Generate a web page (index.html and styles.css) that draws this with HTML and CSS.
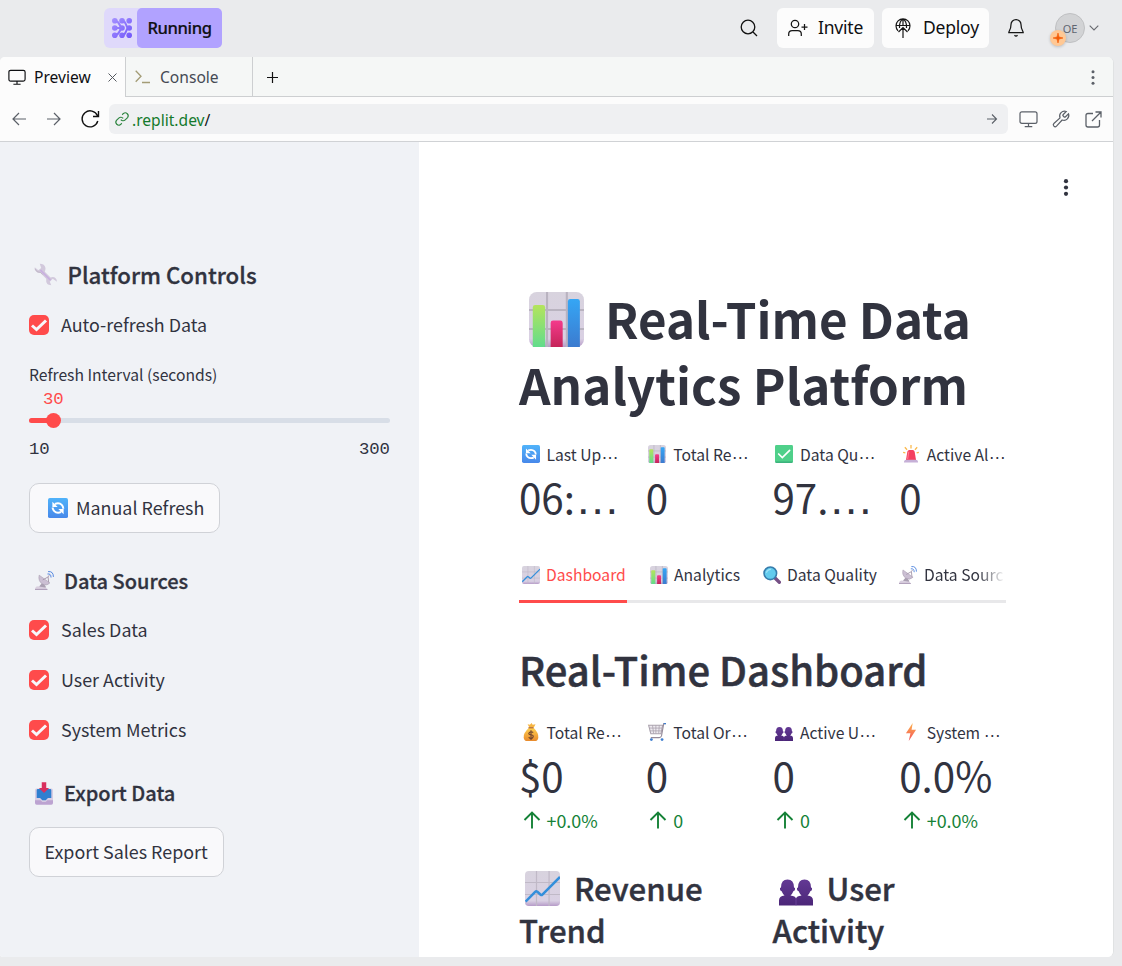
FILE: index.html
```html
<!DOCTYPE html>
<html lang="en">
<head>
<meta charset="utf-8">
<title>Real-Time Data Analytics Platform</title>
<link rel="stylesheet" href="styles.css">
</head>
<body>
<svg class="defs" aria-hidden="true">
  <defs>
    <linearGradient id="gGreen" x2="0" y2="1"><stop stop-color="#b4e45c"/><stop offset="1" stop-color="#62dc8c"/></linearGradient>
    <linearGradient id="gPink" x2="0" y2="1"><stop stop-color="#f43b8c"/><stop offset="1" stop-color="#c52459"/></linearGradient>
    <linearGradient id="gBlue" x2="0" y2="1"><stop stop-color="#35a6f5"/><stop offset="1" stop-color="#3c7bcf"/></linearGradient>
    <linearGradient id="gSky" x2="0" y2="1"><stop stop-color="#50b3fa"/><stop offset="1" stop-color="#4788ea"/></linearGradient>
    <linearGradient id="gPaper" x2="0" y2="1"><stop stop-color="#d8d3de"/><stop offset=".85" stop-color="#d9d0e3"/><stop offset="1" stop-color="#b69bc8"/></linearGradient>
    <linearGradient id="gPurple" x2="0" y2="1"><stop stop-color="#633994"/><stop offset="1" stop-color="#4b2678"/></linearGradient>
    <linearGradient id="gBolt" x2="0" y2="1"><stop stop-color="#fcb34b"/><stop offset="1" stop-color="#f4515c"/></linearGradient>
    <linearGradient id="gGold" x2="0" y2="1"><stop stop-color="#ffcf4f"/><stop offset="1" stop-color="#e88a2c"/></linearGradient>
    <linearGradient id="gLogo" gradientUnits="userSpaceOnUse" x1="0" y1="0" x2="20" y2="20"><stop stop-color="#a592ff"/><stop offset="1" stop-color="#7257fa"/></linearGradient>
  </defs>
  <symbol id="bars" viewBox="0 0 32 32">
    <rect width="32" height="32" rx="4.5" fill="url(#gPaper)"/>
    <path d="M10.5 0v32M22 0v32M0 10.5h32M0 21.5h32" stroke="#b9b3c0" stroke-width="1.2"/>
    <path d="M2.2 32V9q0-1.4 1.4-1.4H8q1.400 0 1.400 1.400v23z" fill="url(#gGreen)"/>
    <path d="M12.600 32V18q0-1.400 1.400-1.400h4.200q1.400 0 1.400 1.400v14z" fill="url(#gPink)"/>
    <path d="M22.600 32V5.500q0-1.400 1.400-1.400h4.200q1.400 0 1.400 1.400V32z" fill="url(#gBlue)"/>
  </symbol>
  <symbol id="trend" viewBox="0 0 32 32">
    <rect width="32" height="32" rx="3.5" fill="url(#gPaper)"/>
    <path d="M10.5 0v32M22 0v32M0 10.5h32M0 21.5h32" stroke="#c0b9c7" stroke-width="1.1"/>
    <path d="M.5 28l8.800-9q1-1 2 0l3 2.700q.8.600 1.600-.2L32 5.500" fill="none" stroke="#348fdb" stroke-width="2.300"/>
  </symbol>
  <symbol id="sync" viewBox="0 0 32 32">
    <rect width="32" height="32" rx="3" fill="url(#gSky)"/>
    <path d="M11 9.500q7-2.500 11 1.500 2.500 2.500 2.500 6M21 22.500q-7 2.500-11-1.500-2.500-2.500-2.500-6" fill="none" stroke="#fff" stroke-width="3.200"/>
    <path d="M7 6v8.500h8.500zM25 26v-8.500h-8.500z" fill="#fff"/>
  </symbol>
  <symbol id="done" viewBox="0 0 32 32">
    <rect width="32" height="32" rx="2.500" fill="#4fd08a"/><path d="M1 30.500h30" stroke="#36a778" stroke-width="2"/>
    <path d="M6.500 16l6.500 6.500L26 9.500" fill="none" stroke="#fff" stroke-width="3" stroke-linecap="round"/>
  </symbol>
  <symbol id="siren" viewBox="0 0 32 32">
    <path d="M5 4l4 4.500M16 0v6M27 4l-4 4.500M2 13l4 1M30 13l-4 1" stroke="#fbb94c" stroke-width="2.300"/>
    <path d="M7 27l2.500-15q.5-3 3.500-3h6q3 0 3.500 3L25 27z" fill="#f43f5e"/><path d="M12 12l-2 13" stroke="#ff7890" stroke-width="2"/>
    <path d="M3.500 31q0-5 4-5h17q4 0 4 5z" fill="#c6b0d7"/>
  </symbol>
  <symbol id="lens" viewBox="0 0 32 32">
    <path d="M20 20l9 9" stroke="#765085" stroke-width="6" stroke-linecap="round"/>
    <circle cx="13" cy="13" r="11.200" fill="#62cbed" stroke="#367cac" stroke-width="2.800"/>
    <path d="M6 12q2-6 8-6" stroke="#a1e3f8" stroke-width="2" fill="none"/>
  </symbol>
  <symbol id="dish" viewBox="0 0 32 32">
    <path d="M8 25l5-6 5 7v3H6z" fill="#aaa0b2"/>
    <path d="M7 7q-2 10 5 14.500t13-1.500z" fill="#cbbfd3" stroke="#a79bae" stroke-width="1"/>
    <path d="M13 15l9-5 1 9M22 10l2-3" stroke="#a698ac" stroke-width="1.600" fill="none"/>
    <path d="M0 30q1-5 7-4l12 2 2 4H0z" fill="#d9cfdf"/><path d="M0 31h21" stroke="#aa9ab5" stroke-width="1.600"/>
    <path d="M21 5q6-1 6 6M22 1q9-1 9 9" fill="none" stroke="#4c82de" stroke-width="1.600"/>
  </symbol>
  <symbol id="wrench" viewBox="0 0 32 32">
    <path d="M1 6l5 4 4-3-2-6q7 0 8 6 0 3-1 5l8 8q8-2 9 6l-6-4-4 4 2 5q-8 0-7-9L9 14Q1 14 1 6z" fill="#d2c9dc"/>
    <path d="M9 10l14 14" stroke="#c8afe0" stroke-width="2.300"/><path d="M1 8q3 6 8 5l3 3" fill="none" stroke="#b7aebc"/>
  </symbol>
  <symbol id="inbox" viewBox="0 0 32 40">
    <rect y="11" width="32" height="25" rx="3" fill="#d7cce2"/><path d="M3 14q0-2 2-2h22q2 0 2 2v14h-6l-4 4h-6l-4-4H3z" fill="#2f7fd0"/>
    <path d="M0 32h10l3 3h6l3-3h10v5q0 3-3 3H3q-3 0-3-3z" fill="#bca3d1"/><path d="M12 0h8v10h5l-9 9-9-9h5z" fill="#d92f5e"/>
  </symbol>
  <symbol id="money" viewBox="0 0 32 32">
    <path d="M10 2l4 1 3-3 2 3 5-1-3 6h-8z" fill="#f6b542"/><path d="M12 9h9q9 9 8 17-1 6-6 6H9q-5 0-6-6-1-8 9-17z" fill="url(#gGold)"/>
    <path d="M11.500 8.500h9" stroke="#a95b2c" stroke-width="2"/><path d="M20 17q-4-3-7 0t3 4 3 5-7-1M16 13v17" fill="none" stroke="#70442e" stroke-width="2"/>
  </symbol>
  <symbol id="cart" viewBox="0 0 32 32">
    <path d="M1 4h25l-3 15H5z" fill="#eeeaf0" stroke="#aaa2ad" stroke-width="1.800"/>
    <path d="M8 4l2 15M14 4v15M20 4l-1 15M2 9h23M3 14h21" stroke="#aaa2ad" stroke-width="1.400"/>
    <path d="M32 1h-4l-4 22q-1 3-4 3H5" fill="none" stroke="#958b9a" stroke-width="2"/>
    <path d="M28 1h4" stroke="#3f7fd0" stroke-width="2.200"/><circle cx="6" cy="29.500" r="2.500" fill="#3f7fd0"/><circle cx="25" cy="29.500" r="2.500" fill="#3f7fd0"/>
  </symbol>
  <symbol id="people" viewBox="0 0 34 26">
    <path d="M2 8q0-8 6.500-8T15 8q1.500 0 1 2-.5 1.500-1.500 1.500Q13 15 11.500 16q5 .500 5.500 3 .500-2.500 5.500-3-1.500-1-3-4.500-1 0-1.500-1.500-.5-2 1-2 0-8 6.500-8T32 8q1.500 0 1 2-.5 1.500-1.500 1.500Q30 15 28.500 16q5.500.500 5.500 5v5H0v-5q0-4.500 5.500-5Q4 15 2.500 11.500q-1 0-1.500-1.500-.5-2 1-2z" fill="url(#gPurple)"/>
    <path d="M17 19v7" stroke="#744aa4" stroke-width=".7"/>
  </symbol>
  <symbol id="bolt" viewBox="0 0 32 32"><path d="M19 0L7 18h8l-3 14L25 12h-8z" fill="url(#gBolt)"/></symbol>
  <symbol id="up" viewBox="0 0 18 18"><path d="M9 17.500V2M1.500 9L9 1.500 16.500 9" fill="none" stroke="currentColor" stroke-width="1.900"/></symbol>
  <symbol id="monitor" viewBox="0 0 20 18"><path d="M3 1h14q2 0 2 2v8q0 2-2 2H3q-2 0-2-2V3q0-2 2-2zM10 13v3.500M6 16.500h8" fill="none" stroke="currentColor" stroke-width="1.300"/></symbol>
  <symbol id="left" viewBox="0 0 14 14"><path d="M14 7H1M7 1L1 7l6 6" fill="none" stroke="currentColor" stroke-width="1.200"/></symbol>
  <symbol id="right" viewBox="0 0 14 14"><path d="M0 7h13M7 1l6 6-6 6" fill="none" stroke="currentColor" stroke-width="1.200"/></symbol>
</svg>

<header class="topbar">
  <div class="run">
    <span class="run-logo"><svg width="20" height="20" viewBox="0 0 20 20" fill="url(#gLogo)"><path d="M3 3q3 0 4.500 3.500T11 10q-2 0-3.500 3.500T3 17M10 3q3 0 4 3.500t3 3.500q-2 0-3 3.500T10 17M3 10h7" stroke="url(#gLogo)" stroke-width="2" fill="none"/><circle cx="2.800" cy="2.800" r="2.800"/><circle cx="10" cy="2.800" r="2.800"/><circle cx="17.200" cy="2.800" r="2.800"/><circle cx="2.800" cy="10" r="2.800"/><circle cx="10" cy="10" r="2.800"/><circle cx="17.200" cy="10" r="2.800"/><circle cx="2.800" cy="17.200" r="2.800"/><circle cx="10" cy="17.200" r="2.800"/><circle cx="17.200" cy="17.200" r="2.800"/></svg></span>
    <span class="run-label">Running</span>
  </div>
  <div class="top-actions">
    <svg class="search" width="18" height="18" viewBox="0 0 18 18"><path d="M13 13l4 4" stroke="#111" stroke-width="1.300"/><circle cx="8" cy="8" r="6.800" fill="none" stroke="#111" stroke-width="1.300"/></svg>
    <button class="top-btn invite"><svg width="20" height="18" viewBox="0 0 20 18" fill="none" stroke="#161616" stroke-width="1.250"><circle cx="7" cy="5" r="3.700"/><path d="M.7 17v-2q0-3.500 3.500-3.500h5.600q3.500 0 3.500 3.500v2M16.500 5v6M13.500 8h6"/></svg><span>Invite</span></button>
    <button class="top-btn deploy"><svg width="16" height="20" viewBox="0 0 16 20" fill="none" stroke="#161616" stroke-width="1.200"><path d="M3 12.800A7 7 0 1 1 13 12.800M1 7.500h14M4.500 10Q4 3.500 8 .7q4 2.800 3.500 9.300M8 .7V8M8 20V10M3.500 14L8 9.500l4.500 4.500"/></svg><span>Deploy</span></button>
    <svg class="bell" width="16" height="18" viewBox="0 0 16 18" fill="none" stroke="#161616" stroke-width="1.250"><path d="M3 5.500a5 5 0 0 1 10 0c0 5 2.200 6.500 2.200 8H.8C.8 12 3 10.500 3 5.500zM6.500 16q1.500 2 3 0"/></svg>
    <div class="avatar"><span>OE</span><i class="spark"><svg width="10" height="10" viewBox="0 0 10 10"><path d="M5 0l1 4 4 1-4 1-1 4-1-4-4-1 4-1z" fill="#f45b05" stroke="#f45b05" stroke-width=".6"/></svg></i></div>
    <svg class="caret" width="10" height="6" viewBox="0 0 10 6"><path d="M.7.700L5 5l4.300-4.300" fill="none" stroke="#686a70" stroke-width="1.100"/></svg>
  </div>
</header>

<div class="pane">
  <nav class="tabs">
    <div class="tab tab-on"><svg width="18" height="17"><use href="#monitor"/></svg><span>Preview</span><svg class="close" width="9" height="9" viewBox="0 0 9 9"><path d="M.5.500l8 8M8.500.500l-8 8" stroke="#555960" stroke-width="1"/></svg></div>
    <div class="tab tab-off"><svg width="15" height="14" viewBox="0 0 15 14"><path d="M.7.700L6 6.200.7 11.700M7 12.500h8" fill="none" stroke="#a39c76" stroke-width="1.300"/></svg><span>Console</span></div>
    <svg class="plus" width="11" height="11" viewBox="0 0 11 11"><path d="M5.500 0v11M0 5.500h11" stroke="#111" stroke-width="1.200"/></svg>
    <svg class="dots" width="4" height="15" viewBox="0 0 4 15" fill="#5b6068"><circle cx="2" cy="1.700" r="1.500"/><circle cx="2" cy="7.500" r="1.500"/><circle cx="2" cy="13.300" r="1.500"/></svg>
  </nav>
  <div class="toolbar">
    <svg class="nav-ic" width="14" height="14"><use href="#left"/></svg>
    <svg class="nav-ic" width="14" height="14"><use href="#right"/></svg>
    <svg class="reload" width="19" height="18" viewBox="0 0 19 18"><path d="M16.800 11A8 8 0 1 1 16.500 5.800M17.500 1v5.500H12" fill="none" stroke="#111" stroke-width="1.400"/></svg>
    <div class="url">
      <svg width="14" height="14" viewBox="0 0 24 24" fill="none" stroke="#2e8540" stroke-width="2"><path d="M10 13a5 5 0 0 0 7.500.5l4-4a5 5 0 0 0-7-7l-2.200 2.200M14 11a5 5 0 0 0-7.500-.5l-4 4a5 5 0 0 0 7 7l2.200-2.200"/></svg>
      <span class="host">.replit.dev<b>/</b></span>
      <svg class="go" width="10" height="10" viewBox="0 0 10 10"><path d="M0 5h9.500M5 .5L9.500 5 5 9.500" fill="none" stroke="#5b6068" stroke-width="1.100"/></svg>
    </div>
    <svg class="t1" width="19" height="17"><use href="#monitor"/></svg>
    <svg class="t2" width="18" height="18" viewBox="0 0 24 24" fill="none" stroke="#5b6068" stroke-width="1.600"><path d="M14.700 6.300a1 1 0 0 0 0 1.400l1.600 1.600a1 1 0 0 0 1.400 0l4.300-4.300a6.500 6.500 0 0 1-8.500 8.300L6 21.500a2.300 2.300 0 0 1-3.500-3.500l8.200-7.500A6.500 6.500 0 0 1 19 2z"/></svg>
    <svg class="t3" width="17" height="17" viewBox="0 0 17 17" fill="none" stroke="#5b6068" stroke-width="1.300"><path d="M8 2.500H3q-2 0-2 2V14q0 2 2 2h9.500q2 0 2-2V9M10.500 1H16v5.500M16 1L7 10"/></svg>
  </div>

  <div class="app">
    <aside class="sidebar">
      <h2 class="side-title"><svg width="23" height="23"><use href="#wrench"/></svg><span>Platform Controls</span></h2>
      <label class="check"><i><svg width="16" height="13" viewBox="0 0 16 13"><path d="M1 6.500l4.500 4L15 1.500" fill="none" stroke="#f7f8fb" stroke-width="3"/></svg></i><span>Auto-refresh Data</span></label>
      <div class="slider-label">Refresh Interval (seconds)</div>
      <div class="slider-value">30</div>
      <div class="track"><div class="fill"></div><div class="thumb"></div></div>
      <div class="range"><span>10</span><span>300</span></div>
      <button class="btn manual"><svg width="20" height="20"><use href="#sync"/></svg><span>Manual Refresh</span></button>
      <h3 class="side-sub sub1"><svg width="19" height="23"><use href="#dish"/></svg><span>Data Sources</span></h3>
      <label class="check"><i><svg width="16" height="13" viewBox="0 0 16 13"><path d="M1 6.500l4.500 4L15 1.500" fill="none" stroke="#f7f8fb" stroke-width="3"/></svg></i><span>Sales Data</span></label>
      <label class="check"><i><svg width="16" height="13" viewBox="0 0 16 13"><path d="M1 6.500l4.500 4L15 1.500" fill="none" stroke="#f7f8fb" stroke-width="3"/></svg></i><span>User Activity</span></label>
      <label class="check"><i><svg width="16" height="13" viewBox="0 0 16 13"><path d="M1 6.500l4.500 4L15 1.500" fill="none" stroke="#f7f8fb" stroke-width="3"/></svg></i><span>System Metrics</span></label>
      <h3 class="side-sub sub2"><svg width="18" height="23"><use href="#inbox"/></svg><span>Export Data</span></h3>
      <button class="btn export"><span>Export Sales Report</span></button>
    </aside>

    <main class="main">
      <div class="menu"><svg width="6" height="17" viewBox="0 0 6 17" fill="#31333f"><circle cx="3" cy="2.200" r="2.100"/><circle cx="3" cy="8.500" r="2.100"/><circle cx="3" cy="14.800" r="2.100"/></svg></div>
      <h1 class="title"><svg width="55" height="55"><use href="#bars"/></svg>Real-Time Data<br><span>Analytics Platform</span></h1>
      <section class="metrics">
        <div><p class="m-label"><svg width="18" height="18"><use href="#sync"/></svg>Last Up<em>…</em></p><p class="m-value">06:<em>…</em></p></div>
        <div><p class="m-label"><svg width="18" height="18"><use href="#bars"/></svg>Total Re<em>…</em></p><p class="m-value">0</p></div>
        <div><p class="m-label"><svg width="18" height="18"><use href="#done"/></svg>Data Qu<em>…</em></p><p class="m-value">97.<em>…</em></p></div>
        <div><p class="m-label"><svg width="18" height="18"><use href="#siren"/></svg>Active Al<em>…</em></p><p class="m-value">0</p></div>
      </section>
      <div class="app-tabs">
        <span class="on"><svg width="18" height="18"><use href="#trend"/></svg>Dashboard</span>
        <span><svg width="18" height="18"><use href="#bars"/></svg>Analytics</span>
        <span><svg width="18" height="18"><use href="#lens"/></svg>Data Quality</span>
        <span><svg width="18" height="18"><use href="#dish"/></svg>Data Sourc</span>
      </div>
      <h2 class="section-title">Real-Time Dashboard</h2>
      <section class="metrics">
        <div><p class="m-label"><svg width="18" height="18"><use href="#money"/></svg>Total Re<em>…</em></p><p class="m-value">$0</p><p class="delta"><svg width="18" height="18"><use href="#up"/></svg>+0.0%</p></div>
        <div><p class="m-label"><svg width="18" height="18"><use href="#cart"/></svg>Total Or<em>…</em></p><p class="m-value">0</p><p class="delta"><svg width="18" height="18"><use href="#up"/></svg>0</p></div>
        <div><p class="m-label"><svg class="low" width="18" height="14"><use href="#people"/></svg>Active U<em>…</em></p><p class="m-value">0</p><p class="delta"><svg width="18" height="18"><use href="#up"/></svg>0</p></div>
        <div><p class="m-label"><svg width="18" height="18"><use href="#bolt"/></svg>System <em>…</em></p><p class="m-value">0.0%</p><p class="delta"><svg width="18" height="18"><use href="#up"/></svg>+0.0%</p></div>
      </section>
      <section class="charts">
        <h3><svg width="35" height="35"><use href="#trend"/></svg>Revenue<br>Trend</h3>
        <h3><svg width="34" height="27"><use href="#people"/></svg>User<br>Activity</h3>
      </section>
    </main>
  </div>
</div>
</body>
</html>
```
FILE: styles.css
```css
* { box-sizing: border-box; margin: 0; padding: 0; }
body { width: 1122px; height: 966px; overflow: hidden; background: #eaebed; font-family: "Noto Sans", sans-serif; color: #0f1013; }
svg { display: block; flex: none; overflow: visible; }
button { font: inherit; color: inherit; border: 0; }
.defs { position: absolute; width: 0; height: 0; }

/* Workspace header */
.topbar { height: 57px; display: flex; justify-content: space-between; padding: 8px 23px 0 104px; }
.run { display: flex; width: 118px; height: 40px; border-radius: 6px; background: #dfd9fb; }
.run-logo { width: 33px; padding: 10px 0 0 8px; }
.run-label { flex: 1; border-radius: 5px; background: #b1a2ff; text-align: center; font-size: 16.6px; font-weight: 500; line-height: 40px; letter-spacing: -0.4px; -webkit-text-stroke: 0.2px; }
.top-actions { display: flex; align-items: center; height: 40px; }
.search { margin-right: 19px; }
.top-btn { display: flex; align-items: center; height: 40px; border-radius: 6px; background: #fcfcfc; font-size: 17.5px; letter-spacing: -0.2px; }
.top-btn span { padding-bottom: 2px; }
.invite { width: 97px; padding-left: 11px; gap: 10px; margin-right: 8px; }
.deploy { width: 107px; padding-left: 13px; gap: 12px; margin-right: 19px; }
.bell { margin-right: 31px; }
.avatar { position: relative; width: 30px; height: 30px; border-radius: 50%; background: #d2d3d5; border: 1px solid #bfc0c2; font-size: 11px; line-height: 29px; text-align: center; color: #5f6570; margin-right: 4px; }
.spark { position: absolute; left: -6px; top: 16px; width: 16px; height: 16px; padding: 3px; border-radius: 50%; background: #ffc894; box-shadow: 0 1px 3px #0003; }

/* Browser pane */
.pane { width: 1114px; height: 900px; overflow: hidden; border-radius: 5px 6px 6px 3px; background: #fcfcfc; border-right: 1px solid #e0e2e3; }
.tabs { display: flex; height: 40px; background: linear-gradient(#cdcfd1, #cdcfd1) 253px 39px / 861px 1px no-repeat #f5f7f6; font-size: 15.6px; }
.tab { display: flex; align-items: center; height: 40px; }
.tab-on { width: 125px; padding-left: 8px; background: #fcfcfc; }
.tab-on span { width: 66px; margin-left: 8px; }
.close { margin-left: 8px; }
.tab-off { width: 128px; border: 1px solid #cdcfd1; border-width: 0 1px 1px; padding-left: 9px; gap: 10px; color: #454a54; }
.plus, .dots { align-self: center; }
.plus { margin-left: 14px; }
.dots { margin-left: auto; margin-right: 18px; }
.toolbar { display: flex; align-items: center; height: 45px; border-bottom: 1px solid #d0d2d5; padding-left: 12px; color: #5b6068; }
.nav-ic { margin-right: 21px; }
.reload { margin-left: -1px; margin-right: 9px; }
.url { display: flex; align-items: center; width: 899px; height: 30px; border-radius: 6px; background: #eff0f2; padding: 0 11px 0 6px; }
.host { margin-left: 3px; padding-top: 1px; font-size: 15.6px; color: #147a2c; }
.host b { font-weight: 400; color: #16181c; }
.go { margin-left: auto; }
.t1 { margin-left: 11px; } .t2 { margin-left: 14px; } .t3 { margin-left: 15px; }

/* Analytics app */
.app { display: flex; height: 815px; font-family: "Noto Sans CJK SC", "Noto Sans", sans-serif; color: #31333f; }
.sidebar { width: 419px; padding: 116px 29px 0; background: #f0f2f6; font-size: 17.9px; }
.side-title, .side-sub { display: flex; align-items: center; font-weight: 500; -webkit-text-stroke: 0.3px #31333f; }
.side-title svg, .side-sub svg { -webkit-text-stroke: 0; }
.side-title span, .side-sub span, .check span, .btn span { padding-bottom: 2px; }
.side-title { height: 36px; padding-left: 5px; gap: 10.5px; font-size: 22.25px; }
.side-title svg { margin-top: -3px; }
.side-title span { padding-bottom: 4px; }
.check { display: flex; align-items: center; height: 50px; gap: 12px; }
.side-title + .check { margin-top: 6px; }
.check i { display: grid; place-items: center; width: 20px; height: 20px; border-radius: 5px; background: #ff4b4b; }
.slider-label { height: 24px; margin-top: 13px; line-height: 24px; font-size: 15.67px; }
.slider-value, .range { font-family: "Liberation Mono", monospace; font-size: 17.3px; }
.slider-value { height: 22px; margin: 1px 0 0 14px; line-height: 24px; color: #ff4b4b; }
.track { position: relative; height: 5px; margin-top: 8px; border-radius: 3px; background: #d8dee7; }
.fill { width: 25px; height: 5px; border-radius: 3px; background: #ff4b4b; }
.thumb { position: absolute; left: 17px; top: -5px; width: 15px; height: 15px; border-radius: 50%; background: #ff4b4b; }
.range { display: flex; justify-content: space-between; height: 26px; margin-top: 13px; line-height: 28px; }
.btn { display: flex; align-items: center; height: 50px; border: 1px solid #d0d2d7; border-radius: 10px; background: #f9f9fb; padding-left: 15px; font-size: 17.9px; }
.manual { width: 191px; padding-left: 18px; gap: 8px; margin-top: 21px; }
.export { width: 195px; padding-left: 14.5px; }
.side-sub { height: 32px; padding-left: 6px; gap: 10px; font-size: 20px; }
.sub1 { margin: 32px 0 8px; }
.sub1 svg { margin-top: -2px; }
.sub2 { margin: 22px 0 18px; gap: 11px; }

.main { position: relative; flex: 1; padding: 143px 0 0 100px; background: #fff; }
.menu { position: absolute; left: 643.5px; top: 37px; }
.title { height: 132px; font-size: 49.25px; line-height: 66px; font-weight: 700; white-space: nowrap; }
.title span { letter-spacing: 0.05px; }
.title svg { display: inline-block; margin: 0 21px 0 10px; vertical-align: -8px; }
.metrics { display: grid; grid-template-columns: repeat(4, 106.75px); gap: 20px; width: 487px; margin-top: 25px; }
.m-label { display: flex; align-items: center; height: 24px; font-size: 15.67px; white-space: pre; }
.m-label svg { margin: 0 7px 0 2.5px; }
.m-label svg.low { margin-top: 4px; }
em { font-family: "Liberation Sans", sans-serif; font-style: normal; font-size: 1.12em; line-height: 1; }
.m-value { height: 64px; line-height: 61px; font-size: 40.3px; white-space: nowrap; }
.delta { display: flex; align-items: center; height: 24px; font-size: 17.9px; color: #158237; }
.delta svg { margin: 0 6px 0 3.5px; }
.app-tabs { display: flex; gap: 20px; width: 487px; height: 54px; margin-top: 19px; padding-bottom: 3px; overflow: hidden; font-size: 15.67px; white-space: nowrap; background: linear-gradient(#e8e8ea, #e8e8ea) 0 51px / 487px 3px no-repeat; }
.app-tabs span { display: flex; align-items: center; height: 54px; flex: none; padding-bottom: 3px; }
.app-tabs span svg { margin: 0 6.5px 0 2.5px; }
.app-tabs .on { width: 108px; color: #ff4b4b; border-bottom: 3px solid #ff4b4b; padding-bottom: 0; }
.app-tabs span:last-child { -webkit-mask-image: linear-gradient(90deg, #000 80px, transparent 108px); mask-image: linear-gradient(90deg, #000 80px, transparent 108px); }
.section-title { height: 60px; margin-top: 36px; line-height: 60px; font-size: 40px; font-weight: 500; white-space: nowrap; -webkit-text-stroke: 0.5px; }
.section-title + .metrics { margin-top: 21px; }
.charts { display: grid; grid-template-columns: 233.5px 233.5px; gap: 20px; margin-top: 35px; }
.charts h3 { font-size: 31.2px; line-height: 42px; font-weight: 500; -webkit-text-stroke: 0.4px; }
.charts svg { display: inline-block; margin: 0 14px 0 6px; vertical-align: -5px; -webkit-text-stroke: 0; }
```
